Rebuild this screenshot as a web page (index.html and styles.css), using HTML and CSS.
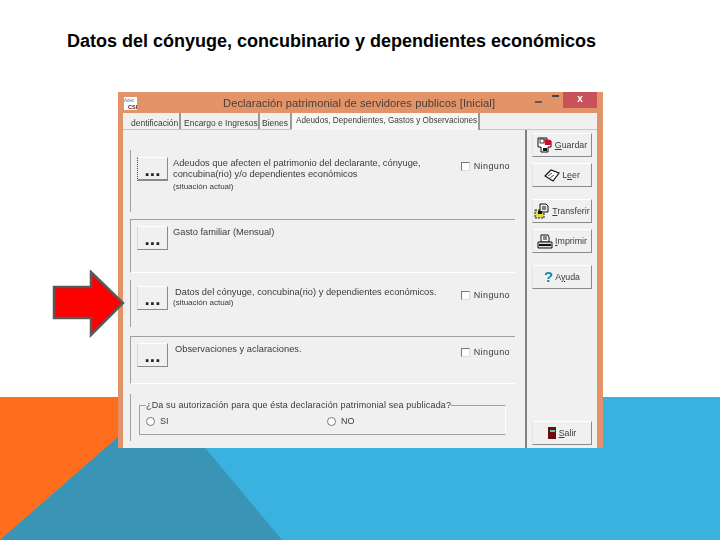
FILE: index.html
```html
<!DOCTYPE html>
<html lang="es">
<head>
  <meta charset="UTF-8" />
  <title>Datos del cónyuge</title>
  <link rel="stylesheet" href="styles.css">
</head>
<body>

  <div class="slide">
    <svg class="backdrop" width="720" height="143" viewBox="0 0 720 143">
      <rect width="720" height="143" fill="#3ab2e0"/>
      <polygon points="0,0 118,0 118,40 0,143" fill="#ff6d1d"/>
      <polygon points="0,143 118,40 196,40 282,143" fill="#3a94b5"/>
    </svg>

    <h1>Datos del cónyuge, concubinario y dependientes económicos</h1>

    <div class="app">
      <div class="titlebar">
        <svg class="app-icon" width="13" height="13" viewBox="0 0 13 13">
          <rect width="13" height="13" fill="#fff"/>
          <text x="0" y="5" font-size="4.5" font-family="Liberation Sans" fill="#4a6fb0">Adec</text>
          <text x="4" y="11.5" font-size="5.5" font-weight="bold" font-family="Liberation Sans" fill="#5a1010">CSI</text>
        </svg>
        <div class="app-title">Declaración patrimonial de servidores publicos [Inicial]</div>
        <div class="win-min"></div>
        <div class="win-max"></div>
        <div class="win-close">x</div>
      </div>

      <div class="app-inner">
        <div class="tabs">
          <div class="tab tab-first">dentificación</div>
          <div class="tab tab-enc">Encargo e Ingresos</div>
          <div class="tab tab-bienes">Bienes</div>
          <div class="tab tab-active">Adeudos, Dependientes, Gastos y Observaciones</div>
        </div>

        <div class="content">
          <div class="pane">
            <div class="group">
              <button class="btn-dots btn-focus">...</button>
              <div class="group-text">
                <p>Adeudos que afecten el patrimonio del declarante, cónyuge,<br>concubina(rio) y/o dependientes económicos</p>
                <p class="small">(situación actual)</p>
              </div>
              <label class="none"><span class="check"></span>Ninguno</label>
            </div>

            <div class="group group-ruled">
              <button class="btn-dots">...</button>
              <div class="group-text">
                <p>Gasto familiar (Mensual)</p>
              </div>
            </div>

            <div class="group group-third">
              <button class="btn-dots">...</button>
              <div class="group-text text-tight">
                <p class="shift">Datos del cónyuge, concubina(rio) y dependientes económicos.</p>
                <p class="small">(situación actual)</p>
              </div>
              <label class="none"><span class="check"></span>Ninguno</label>
            </div>

            <div class="group group-ruled">
              <button class="btn-dots">...</button>
              <div class="group-text">
                <p class="shift">Observaciones y aclaraciones.</p>
              </div>
              <label class="none"><span class="check"></span>Ninguno</label>
            </div>

            <div class="group group-last">
              <fieldset class="consent">
                <legend>¿Da su autorización para que ésta declaración patrimonial sea publicada?</legend>
                <label class="radio radio-si"><span class="dot"></span>SI</label>
                <label class="radio"><span class="dot"></span>NO</label>
              </fieldset>
            </div>
          </div>

          <div class="toolbar">
            <button class="btn-tool">
              <svg width="16" height="16" viewBox="0 0 16 16">
                <path d="M1 1h9v3h4v6h-3v5H4v-5H1z" fill="#fff" stroke="#111"/>
                <rect x="3" y="2" width="4" height="4" fill="#fff" stroke="#111" stroke-width=".8"/>
                <path d="M7 2l7 1v5H8z" fill="#c8102e"/>
                <rect x="6" y="11" width="4" height="3" fill="#111"/>
              </svg>
              <span><u>G</u>uardar</span>
            </button>
            <button class="btn-tool">
              <svg width="16" height="13" viewBox="0 0 16 13">
                <path d="M1 7l6-6 8 3-6 8z" fill="#fff" stroke="#111" stroke-width="1.2"/>
                <path d="M4 7l4-3M6 9l4-3" stroke="#555" fill="none"/>
              </svg>
              <span>L<u>e</u>er</span>
            </button>
            <button class="btn-tool btn-gap">
              <svg width="16" height="16" viewBox="0 0 16 16">
                <rect x="1" y="7" width="9" height="8" fill="#d8dc4a" stroke="#222" stroke-dasharray="2 1"/>
                <path d="M6 1h6l2 2v6H6z" fill="#eee" stroke="#111"/>
                <path d="M8 4h4M8 6h4" stroke="#111"/>
                <rect x="4" y="8" width="4" height="3" fill="#111"/>
              </svg>
              <span><u>T</u>ransferir</span>
            </button>
            <button class="btn-tool">
              <svg width="16" height="15" viewBox="0 0 16 15">
                <path d="M4 1h7l1 2v5H4z" fill="#fff" stroke="#111"/>
                <path d="M6 3h4M6 5h4" stroke="#111"/>
                <path d="M1 8h14v6H1z" fill="#ddd" stroke="#111"/>
                <path d="M2 11h12" stroke="#111" stroke-width="2"/>
              </svg>
              <span><u>I</u>mprimir</span>
            </button>
            <button class="btn-tool btn-gap">
              <span class="help">?</span>
              <span>A<u>y</u>uda</span>
            </button>
            <button class="btn-tool btn-exit">
              <svg width="9" height="13" viewBox="0 0 9 13">
                <rect width="8" height="12" fill="#6d0b12"/>
                <rect x="2" y="3" width="5" height="2" fill="#4fd0a5"/>
              </svg>
              <span><u>S</u>alir</span>
            </button>
          </div>
        </div>
      </div>
    </div>

    <svg class="arrow" width="74" height="68" viewBox="0 0 74 68">
      <polygon points="2,17 39,17 39,2 71,33 39,65 39,48 2,48" fill="#fe0000" stroke="#595959" stroke-width="2.5"/>
    </svg>
  </div>

</body>
</html>
```

FILE: styles.css
```css
* {
  box-sizing: border-box;
  margin: 0;
  padding: 0;
}

body {
  background-color: #fff;
  font-family: 'Liberation Sans', Arial, sans-serif;
}

.slide {
  position: relative;
  width: 720px;
  height: 540px;
  overflow: hidden;
  padding-top: 32px;
}

.backdrop {
  position: absolute;
  left: 0;
  top: 397px;
}

.arrow {
  position: absolute;
  left: 52px;
  top: 270px;
}

h1 {
  position: relative;
  margin-left: 67px;
  font-size: 18px;
  line-height: 19px;
  font-weight: bold;
  color: #000;
  margin-bottom: 41px;
  white-space: nowrap;
}

/* ventana */
.app {
  position: relative;
  width: 485px;
  height: 356px;
  margin-left: 118px;
  background-color: #e39368;
  padding: 0 6px 0 5px;
  color: #3a3a3a;
  font-size: 9.3px;
  filter: blur(0.3px);
}

.titlebar {
  display: flex;
  height: 21px;
  align-items: flex-start;
}

.app-icon {
  margin: 5px 0 0 1px;
  flex: none;
}

.app-title {
  margin: 4px 0 0 86px;
  width: 286px;
  flex: none;
  font-size: 11.2px;
  line-height: 14px;
  letter-spacing: 0.05px;
  white-space: nowrap;
  color: #4a4038;
}

.win-min {
  width: 7px;
  height: 2px;
  margin: 9px 0 0 26px;
  background-color: #5a5a5a;
}

.win-max {
  width: 7px;
  height: 7px;
  margin: 3px 0 0 10px;
  border-top: 2px solid #444;
}

.win-close {
  width: 34px;
  height: 16px;
  margin-left: 4px;
  background-color: #c9525a;
  color: #fff;
  text-align: center;
  font-size: 10px;
  font-weight: bold;
  line-height: 14px;
}

.app-inner {
  height: 335px;
  background-color: #f0f0f0;
}

.tabs {
  display: flex;
  height: 17px;
  border-bottom: 1px solid #c8c8c8;
  padding-left: 8px;
}

.tab {
  height: 16px;
  padding-top: 2px;
  line-height: 16px;
  font-size: 8.5px;
  white-space: nowrap;
  border-right: 2px solid #9a9a9a;
}

.tab-first { width: 50px; }
.tab-enc { width: 79px; padding-left: 3px; }
.tab-bienes { width: 32px; padding-left: 2px; }

.tab-active {
  width: 188px;
  height: 17px;
  padding: 0 0 0 4px;
  background-color: #f7f7f7;
  font-size: 8.2px;
  line-height: 15px;
}

.content {
  display: flex;
  height: 318px;
}

.pane {
  display: grid;
  grid-template-rows: 62px 54px 49px 48px 1fr;
  row-gap: 7px;
  width: 404px;
  padding: 20px 10px 0 7px;
  border-right: 2px solid #808080;
}

.group {
  display: flex;
  padding: 7px 5px 0 6px;
  border-left: 1px solid #a0a0a0;
}

.group-ruled {
  border-top: 1px solid #a0a0a0;
  border-bottom: 1px solid #fff;
  padding-top: 6px;
}

.group-third {
  margin-bottom: 2px;
  padding-top: 6px;
}

.group-last {
  margin-top: 3px;
  margin-bottom: 7px;
  padding: 0 0 0 8px;
}

.btn-dots {
  flex: none;
  width: 31px;
  height: 24px;
  overflow: hidden;
  background-color: #f0f0f0;
  border: 1px solid;
  border-color: #fff #8a8a8a #8a8a8a #d8d8d8;
  font-family: 'Liberation Sans', Arial, sans-serif;
  font-size: 19px;
  font-weight: bold;
  line-height: 23px;
  color: #222;
}

.btn-focus {
  border-left: 1px dotted #444;
  border-bottom-width: 2px;
}

.group-text {
  margin-left: 5px;
  padding-top: 1px;
  width: 284px;
  flex: none;
  line-height: 11px;
}

.shift { margin-left: 2px; }

.small {
  font-size: 8px;
  line-height: 13px;
}

.text-tight .small { margin-top: -2px; }

.none {
  display: flex;
  align-items: center;
  height: 10px;
  margin: 4px 0 0 auto;
  gap: 4px;
  font-size: 9px;
  letter-spacing: 0.4px;
}

.check {
  width: 9px;
  height: 9px;
  background-color: #fff;
  border: 1px solid;
  border-color: #777 #ddd #ddd #777;
}

.consent {
  flex: 1;
  height: 35px;
  margin: 6px 9px 0 0;
  display: flex;
  padding: 0 0 0 6px;
  border: 1px solid;
  border-color: #a0a0a0 #fff #a0a0a0 #a0a0a0;
  font-size: 9px;
}

.consent legend {
  line-height: 10px;
  letter-spacing: 0.13px;
}

.radio {
  display: flex;
  align-items: center;
  height: 12px;
  margin-top: 5px;
  gap: 5px;
}

.radio-si { width: 181px; }

.dot {
  width: 9px;
  height: 9px;
  border-radius: 50%;
  background-color: #fff;
  border: 1px solid #777;
}

/* botones de la derecha */
.toolbar {
  flex: 1;
  display: flex;
  flex-direction: column;
  gap: 6px;
  padding: 3px 0 3px 5px;
}

.btn-tool {
  display: flex;
  align-items: center;
  justify-content: center;
  gap: 2px;
  width: 60px;
  height: 24px;
  background-color: #f0f0f0;
  border: 1px solid;
  border-color: #fff #8a8a8a #8a8a8a #e4e4e4;
  font-family: 'Liberation Sans', Arial, sans-serif;
  font-size: 8.8px;
  color: #3a3a3a;
}

.btn-gap { margin-top: 6px; }

.btn-exit { margin-top: auto; }

.help {
  font-size: 15px;
  line-height: 16px;
  font-weight: bold;
  color: #17889a;
}
```
